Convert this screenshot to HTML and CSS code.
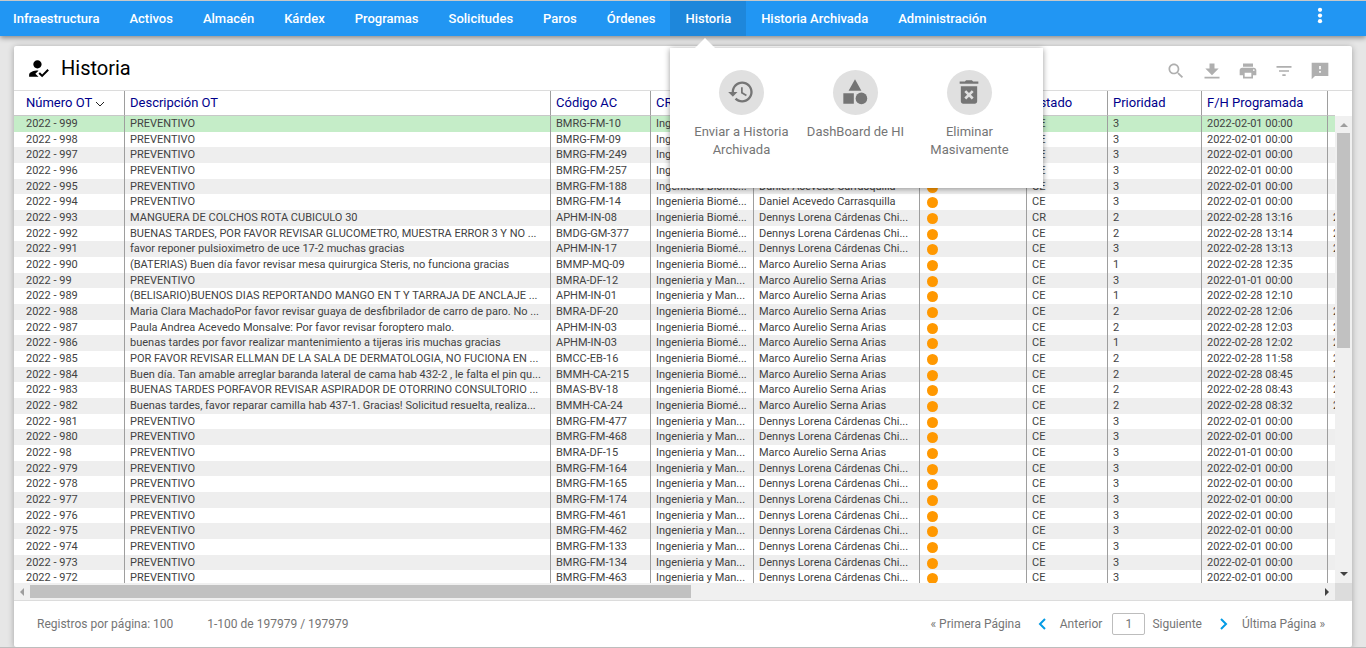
FILE: index.html
```
<!DOCTYPE html>
<html lang="es">
<head>
    <meta charset="UTF-8">
    <meta name="viewport" content="width=device-width, initial-scale=1.0">
    <title>Historia</title>
    <link rel="stylesheet" href="styles.css">
</head>
<body>
    <nav class="navbar">
        <ul class="menu">
            <li><a href="#">Infraestructura</a></li>
            <li><a href="#">Activos</a></li>
            <li><a href="#">Almacén</a></li>
            <li><a href="#">Kárdex</a></li>
            <li><a href="#">Programas</a></li>
            <li><a href="#">Solicitudes</a></li>
            <li><a href="#">Paros</a></li>
            <li><a href="#">Órdenes</a></li>
            <li class="active">
                <a href="#">Historia</a>
                <div class="submenu">
                    <a href="#" class="option">
                        <span class="circle">
                            <svg viewBox="0 0 24 24"><path d="M13 3c-4.97 0-9 4.03-9 9H1l3.89 3.89.07.14L9 12H6c0-3.87 3.13-7 7-7s7 3.13 7 7-3.13 7-7 7c-1.93 0-3.68-.79-4.94-2.06l-1.42 1.42C8.27 19.99 10.51 21 13 21c4.97 0 9-4.03 9-9s-4.03-9-9-9zm-1 5v5l4.28 2.54.72-1.21-3.5-2.08V8H12z"/></svg>
                        </span>
                        Enviar a Historia Archivada
                    </a>
                    <a href="#" class="option">
                        <span class="circle">
                            <svg viewBox="0 0 24 24"><path d="M12 1l5.500 10h-11zM2 13h9v9H2z"/><circle cx="17.500" cy="17.500" r="5"/></svg>
                        </span>
                        DashBoard de HI
                    </a>
                    <a href="#" class="option">
                        <span class="circle">
                            <svg viewBox="0 0 24 24"><path d="M5 20c0 1.1.9 2 2 2h10c1.1 0 2-.9 2-2V7H5v13zm3-8l1.6-1.6L12 12.8l2.4-2.4L16 12l-2.4 2.4 2.4 2.4-1.6 1.6L12 16l-2.4 2.4L8 16.800l2.400-2.400zM15.500 3l-1-1h-5l-1 1H4v2h16V3z"/></svg>
                        </span>
                        Eliminar Masivamente
                    </a>
                </div>
            </li>
            <li><a href="#">Historia Archivada</a></li>
            <li><a href="#">Administración</a></li>
        </ul>
        <button class="more" aria-label="Más opciones">
            <svg viewBox="0 0 24 24"><circle cx="12" cy="4" r="3"/><circle cx="12" cy="12" r="3"/><circle cx="12" cy="20" r="3"/></svg>
        </button>
    </nav>

    <main class="card">
        <header class="card-header">
            <svg class="title-icon" viewBox="0 0 24 24"><path d="M9 17l3-2.940c-.39-.04-.68-.06-1-.06-2.670 0-8 1.340-8 4v2h9l-3-3zm2-5c2.210 0 4-1.790 4-4s-1.790-4-4-4-4 1.790-4 4 1.790 4 4 4zm4.470 8.500L12 17l1.400-1.410 2.070 2.080 5.130-5.170 1.400 1.410z"/></svg>
            <h1>Historia</h1>
            <div class="tools">
                <button aria-label="Buscar"><svg viewBox="0 0 24 24"><path d="M15.500 14h-.79l-.28-.27C15.410 12.590 16 11.110 16 9.500 16 5.910 13.090 3 9.500 3S3 5.910 3 9.500 5.910 16 9.500 16c1.610 0 3.090-.59 4.230-1.570l.27.28v.79l5 4.990L20.490 19l-4.990-5zm-6 0C7.010 14 5 11.990 5 9.500S7.010 5 9.500 5 14 7.010 14 9.500 11.990 14 9.500 14z"/></svg></button>
                <button aria-label="Descargar"><svg viewBox="0 0 24 24"><path d="M20 9h-5V3H9v6H4l8 8 8-8zM3 19v2h18v-2H3z"/></svg></button>
                <button aria-label="Imprimir"><svg viewBox="0 0 24 24"><path d="M19 8H5c-1.660 0-3 1.340-3 3v6h4v4h12v-4h4v-6c0-1.660-1.340-3-3-3zm-3 11H8v-5h8v5zm3-7c-.55 0-1-.45-1-1s.45-1 1-1 1 .45 1 1-.45 1-1 1zm-1-9H6v4h12V3z"/></svg></button>
                <button aria-label="Filtrar"><svg viewBox="0 0 24 24"><path d="M10 18h4v-2h-4v2zM3 6v2h18V6H3zm3 7h12v-2H6v2z"/></svg></button>
                <button aria-label="Comentarios"><svg viewBox="0 0 24 24"><path d="M22 2H2v20l4-4h16V2zm-9 12h-2v-2h2v2zm0-4h-2V6h2v4z"/></svg></button>
            </div>
        </header>

        <div class="grid">
            <div class="grid-view">
                <table>
                    <colgroup>
                        <col class="c-num"><col class="c-desc"><col class="c-code"><col class="c-cr"><col class="c-name">
                        <col class="c-dot"><col class="c-state"><col class="c-prio"><col class="c-date"><col class="c-date">
                    </colgroup>
                    <thead>
                        <tr>
                            <th>Número OT <svg class="sort" viewBox="0 0 8 6"><path d="M0 1l4 4 4-4"/></svg></th>
                            <th>Descripción OT</th>
                            <th>Código AC</th>
                            <th>CR</th>
                            <th>Responsable</th>
                            <th></th>
                            <th>Estado</th>
                            <th>Prioridad</th>
                            <th>F/H Programada</th>
                            <th></th>
                        </tr>
                    </thead>
                    <tbody id="rows"></tbody>
                </table>
            </div>
            <div class="vbar"><span class="arrow up"></span><span class="thumb"></span><span class="arrow down"></span></div>
            <div class="hbar"><span class="arrow left"></span><span class="thumb"></span><span class="arrow right"></span></div>
            <div class="corner"></div>
        </div>

        <footer class="pager">
            <span>Registros por página: 100</span>
            <span class="count">1-100 de 197979 / 197979</span>
            <a href="#" class="first">« Primera Página</a>
            <a href="#" class="prev"><svg viewBox="0 0 8 12"><path d="M7 1L2 6l5 5"/></svg>Anterior</a>
            <input type="text" value="1" aria-label="Página">
            <a href="#" class="next">Siguiente<svg viewBox="0 0 8 12"><path d="M1 1l5 5-5 5"/></svg></a>
            <a href="#">Última Página »</a>
        </footer>
    </main>

    <script>
        const bio = "Ingenieria Biomé...";
        const man = "Ingenieria y Man...";
        const daniel = "Daniel Acevedo Carrasquilla";
        const dennys = "Dennys Lorena Cárdenas Chi...";
        const marco = "Marco Aurelio Serna Arias";
        const feb = "2022-02-01 00:00";

        // numero, descripcion, codigo, centro, responsable, estado, prioridad, fecha, fecha fin
        const ordenes = [
            [999, "PREVENTIVO", "BMRG-FM-10", bio, daniel, "CE", 3, feb, ""],
            [998, "PREVENTIVO", "BMRG-FM-09", bio, daniel, "CE", 3, feb, ""],
            [997, "PREVENTIVO", "BMRG-FM-249", bio, daniel, "CE", 3, feb, ""],
            [996, "PREVENTIVO", "BMRG-FM-257", bio, daniel, "CE", 3, feb, ""],
            [995, "PREVENTIVO", "BMRG-FM-188", bio, daniel, "CE", 3, feb, ""],
            [994, "PREVENTIVO", "BMRG-FM-14", bio, daniel, "CE", 3, feb, ""],
            [993, "MANGUERA DE COLCHOS ROTA CUBICULO 30", "APHM-IN-08", bio, dennys, "CR", 2, "2022-02-28 13:16", "2022-02-28"],
            [992, "BUENAS TARDES, POR FAVOR REVISAR GLUCOMETRO, MUESTRA ERROR 3 Y NO ...", "BMDG-GM-377", bio, dennys, "CE", 2, "2022-02-28 13:14", "2022-02-28"],
            [991, "favor reponer pulsioximetro de uce 17-2 muchas gracias", "APHM-IN-17", bio, dennys, "CE", 3, "2022-02-28 13:13", "2022-02-28"],
            [990, "(BATERIAS) Buen día favor revisar mesa quirurgica Steris, no funciona gracias", "BMMP-MQ-09", bio, marco, "CE", 1, "2022-02-28 12:35", ""],
            [99, "PREVENTIVO", "BMRA-DF-12", man, marco, "CE", 3, "2022-01-01 00:00", ""],
            [989, "(BELISARIO)BUENOS DIAS REPORTANDO MANGO EN T Y TARRAJA DE ANCLAJE ...", "APHM-IN-01", man, marco, "CE", 1, "2022-02-28 12:10", ""],
            [988, "Maria Clara MachadoPor favor revisar guaya de desfibrilador de carro de paro. No ...", "BMRA-DF-20", bio, marco, "CE", 2, "2022-02-28 12:06", "2022-02-28"],
            [987, "Paula Andrea Acevedo Monsalve: Por favor revisar foroptero malo.", "APHM-IN-03", bio, marco, "CE", 2, "2022-02-28 12:03", "2022-02-28"],
            [986, "buenas tardes por favor realizar mantenimiento a tijeras iris muchas gracias", "APHM-IN-03", bio, marco, "CE", 1, "2022-02-28 12:02", "2022-02-28"],
            [985, "POR FAVOR REVISAR ELLMAN DE LA SALA DE DERMATOLOGIA, NO FUCIONA EN ...", "BMCC-EB-16", bio, marco, "CE", 2, "2022-02-28 11:58", "2022-02-28"],
            [984, "Buen día. Tan amable arreglar baranda lateral de cama hab 432-2 , le falta el pin qu...", "BMMH-CA-215", bio, marco, "CE", 2, "2022-02-28 08:45", "2022-02-28"],
            [983, "BUENAS TARDES PORFAVOR REVISAR ASPIRADOR DE OTORRINO CONSULTORIO ...", "BMAS-BV-18", bio, marco, "CE", 2, "2022-02-28 08:43", "2022-02-28"],
            [982, "Buenas tardes, favor reparar camilla hab 437-1. Gracias! Solicitud resuelta, realiza...", "BMMH-CA-24", bio, marco, "CE", 2, "2022-02-28 08:32", "2022-02-28"],
            [981, "PREVENTIVO", "BMRG-FM-477", man, dennys, "CE", 3, feb, ""],
            [980, "PREVENTIVO", "BMRG-FM-468", man, dennys, "CE", 3, feb, ""],
            [98, "PREVENTIVO", "BMRA-DF-15", man, marco, "CE", 3, "2022-01-01 00:00", ""],
            [979, "PREVENTIVO", "BMRG-FM-164", man, dennys, "CE", 3, feb, ""],
            [978, "PREVENTIVO", "BMRG-FM-165", man, dennys, "CE", 3, feb, ""],
            [977, "PREVENTIVO", "BMRG-FM-174", man, dennys, "CE", 3, feb, ""],
            [976, "PREVENTIVO", "BMRG-FM-461", man, dennys, "CE", 3, feb, ""],
            [975, "PREVENTIVO", "BMRG-FM-462", man, dennys, "CE", 3, feb, ""],
            [974, "PREVENTIVO", "BMRG-FM-133", man, dennys, "CE", 3, feb, ""],
            [973, "PREVENTIVO", "BMRG-FM-134", man, dennys, "CE", 3, feb, ""],
            [972, "PREVENTIVO", "BMRG-FM-463", man, dennys, "CE", 3, feb, ""]
        ];

        document.getElementById("rows").innerHTML = ordenes.map((o) => `
            <tr>
                <td>2022 - ${o[0]}</td>
                <td>${o[1]}</td>
                <td>${o[2]}</td>
                <td>${o[3]}</td>
                <td>${o[4]}</td>
                <td><span class="dot"></span></td>
                <td>${o[5]}</td>
                <td>${o[6]}</td>
                <td>${o[7]}</td>
                <td>${o[8]}</td>
            </tr>
        `).join("");
    </script>
</body>
</html>
```
FILE: styles.css
```
* {
    box-sizing: border-box;
}

body {
    display: flex;
    flex-direction: column;
    height: 100vh;
    margin: 0;
    overflow: hidden;
    background: #e6e6e6;
    border-top: 1px solid #c8c8c8;
    border-bottom: 1px solid #bdbdbd;
    font-family: Roboto, Arial, sans-serif;
    font-size: 12px;
    color: #757575;
}

a {
    color: inherit;
    text-decoration: none;
}

button {
    padding: 0;
    border: none;
    background: none;
    cursor: pointer;
}

svg {
    display: block;
    fill: currentColor;
}

/* Navbar */
.navbar {
    position: relative;
    z-index: 2;
    display: flex;
    justify-content: space-between;
    height: 35px;
    background: #2196f3;
    box-shadow: 0 2px 5px rgba(0, 0, 0, 0.4);
}

.menu {
    display: flex;
    margin: 0 0 0 -2px;
    padding: 0;
    list-style: none;
}

.menu li {
    position: relative;
}

.menu li > a {
    display: block;
    padding: 0 15px;
    line-height: 35px;
    font-size: 13px;
    font-weight: 500;
    color: #fff;
}

.menu .active {
    background: #1e87db;
}

.more {
    width: 20px;
    height: 28px;
    margin-right: 36px;
    color: #fff;
}

.more svg {
    width: 20px;
    height: 17px;
}

.submenu {
    position: absolute;
    top: 47px;
    left: 0;
    display: flex;
    width: 373px;
    padding: 22px 17px 29px 14px;
    background: #fff;
    box-shadow: 0 1px 6px rgba(0, 0, 0, 0.4);
}

.submenu::before {
    content: "";
    position: absolute;
    top: -10px;
    left: 25px;
    border: 10px solid transparent;
    border-top: 0;
    border-bottom-color: #fff;
}

.option {
    flex: 1;
    font-size: 13px;
    line-height: 18px;
    text-align: center;
}

.circle {
    display: flex;
    align-items: center;
    justify-content: center;
    width: 45px;
    height: 45px;
    margin: 0 auto 8px;
    border-radius: 50%;
    background: #e0e0e0;
}

.circle svg {
    width: 28px;
    height: 28px;
    margin-bottom: 2px;
}

/* Card */
.card {
    display: flex;
    flex: 1;
    flex-direction: column;
    min-height: 0;
    margin: 10px 14px 0;
    border-radius: 2px;
    background: #fff;
    box-shadow: 0 1px 6px rgba(0, 0, 0, 0.3);
}

.card-header {
    display: flex;
    align-items: center;
    height: 45px;
    padding: 0 22px 0 12px;
    border-bottom: 1px solid #dcdcdc;
    color: #000;
}

.title-icon {
    width: 25px;
    height: 25px;
}

.card-header h1 {
    margin: 0 auto 0 10px;
    font-size: 20px;
    font-weight: 400;
}

.tools {
    display: flex;
    gap: 16px;
    margin-top: 5px;
    color: #afafaf;
}

.tools button {
    color: inherit;
}

.tools svg {
    width: 20px;
    height: 20px;
}

/* Grid */
.grid {
    display: grid;
    flex: 1;
    grid-template-columns: 1fr 17px;
    grid-template-rows: 1fr 17px;
    min-height: 0;
    border-bottom: 1px solid #dcdcdc;
}

.grid-view {
    min-width: 0;
    min-height: 0;
    overflow: hidden;
}

table {
    width: 1440px;
    border-collapse: separate;
    border-spacing: 0;
    table-layout: fixed;
}

.c-num { width: 111px; }
.c-desc { width: 426px; }
.c-code { width: 100px; }
.c-cr { width: 103px; }
.c-name { width: 166px; }
.c-dot { width: 107px; }
.c-state { width: 81px; }
.c-prio { width: 94px; }
.c-date { width: 126px; }

th,
td {
    padding: 0 5px;
    overflow: hidden;
    border-right: 1px solid #9e9e9e;
    text-align: left;
    text-overflow: ellipsis;
    vertical-align: top;
    white-space: nowrap;
}

th:first-child,
td:first-child {
    padding-left: 12px;
}

th {
    height: 25px;
    border-bottom: 1px solid #c8c8c8;
    font-size: 13px;
    font-weight: 400;
    line-height: 23px;
    color: #00008b;
}

td {
    height: 16px;
    font-size: 11px;
    line-height: 15px;
    color: #424242;
}

tbody tr:nth-child(3n + 2) td {
    height: 15px;
}

tbody tr:nth-child(odd) {
    background: #eee;
}

tbody tr:first-child {
    background: #c5edc8;
}

.sort {
    display: inline-block;
    width: 8px;
    height: 6px;
    margin-left: 1px;
    fill: none;
    stroke: #212121;
}

.dot {
    display: block;
    width: 11px;
    height: 11px;
    margin: 3px 0 0 2px;
    border-radius: 50%;
    background: #ff9800;
}

/* Scrollbars */
.vbar {
    display: flex;
    flex-direction: column;
    align-items: center;
    justify-content: space-between;
    margin-top: 25px;
    padding: 7px 0;
    background: #f0f0f0;
}

.vbar .thumb {
    width: 13px;
    height: 215px;
    margin: 6px 0 auto;
    background: #c1c1c1;
}

.hbar {
    display: flex;
    align-items: center;
    background: #f0f0f0;
}

.hbar .thumb {
    width: 50%;
    height: 13px;
    margin-right: auto;
    background: #c1c1c1;
}

.hbar .arrow {
    margin: 0 6px;
}

.corner {
    background: #dcdcdc;
}

.arrow {
    border: 4px solid transparent;
}

.up {
    border-top: 0;
    border-bottom-color: #9e9e9e;
}

.down {
    border-bottom: 0;
    border-top-color: #424242;
}

.left {
    border-left: 0;
    border-right-color: #9e9e9e;
}

.right {
    border-right: 0;
    border-left-color: #424242;
}

/* Pager */
.pager {
    display: flex;
    align-items: center;
    height: 46px;
    padding: 0 27px 0 23px;
}

.count {
    margin: 0 auto 0 34px;
}

.pager a {
    display: flex;
    align-items: center;
}

.pager svg {
    width: 8px;
    height: 12px;
    fill: none;
    stroke: #039be5;
    stroke-width: 2;
}

.prev {
    gap: 14px;
    margin: 0 10px 0 17px;
}

.next {
    gap: 18px;
    margin: 0 14px 0 7px;
}

.pager input {
    width: 33px;
    height: 22px;
    padding: 0;
    border: 1px solid #bdbdbd;
    border-radius: 2px;
    font: inherit;
    color: inherit;
    text-align: center;
}
```
